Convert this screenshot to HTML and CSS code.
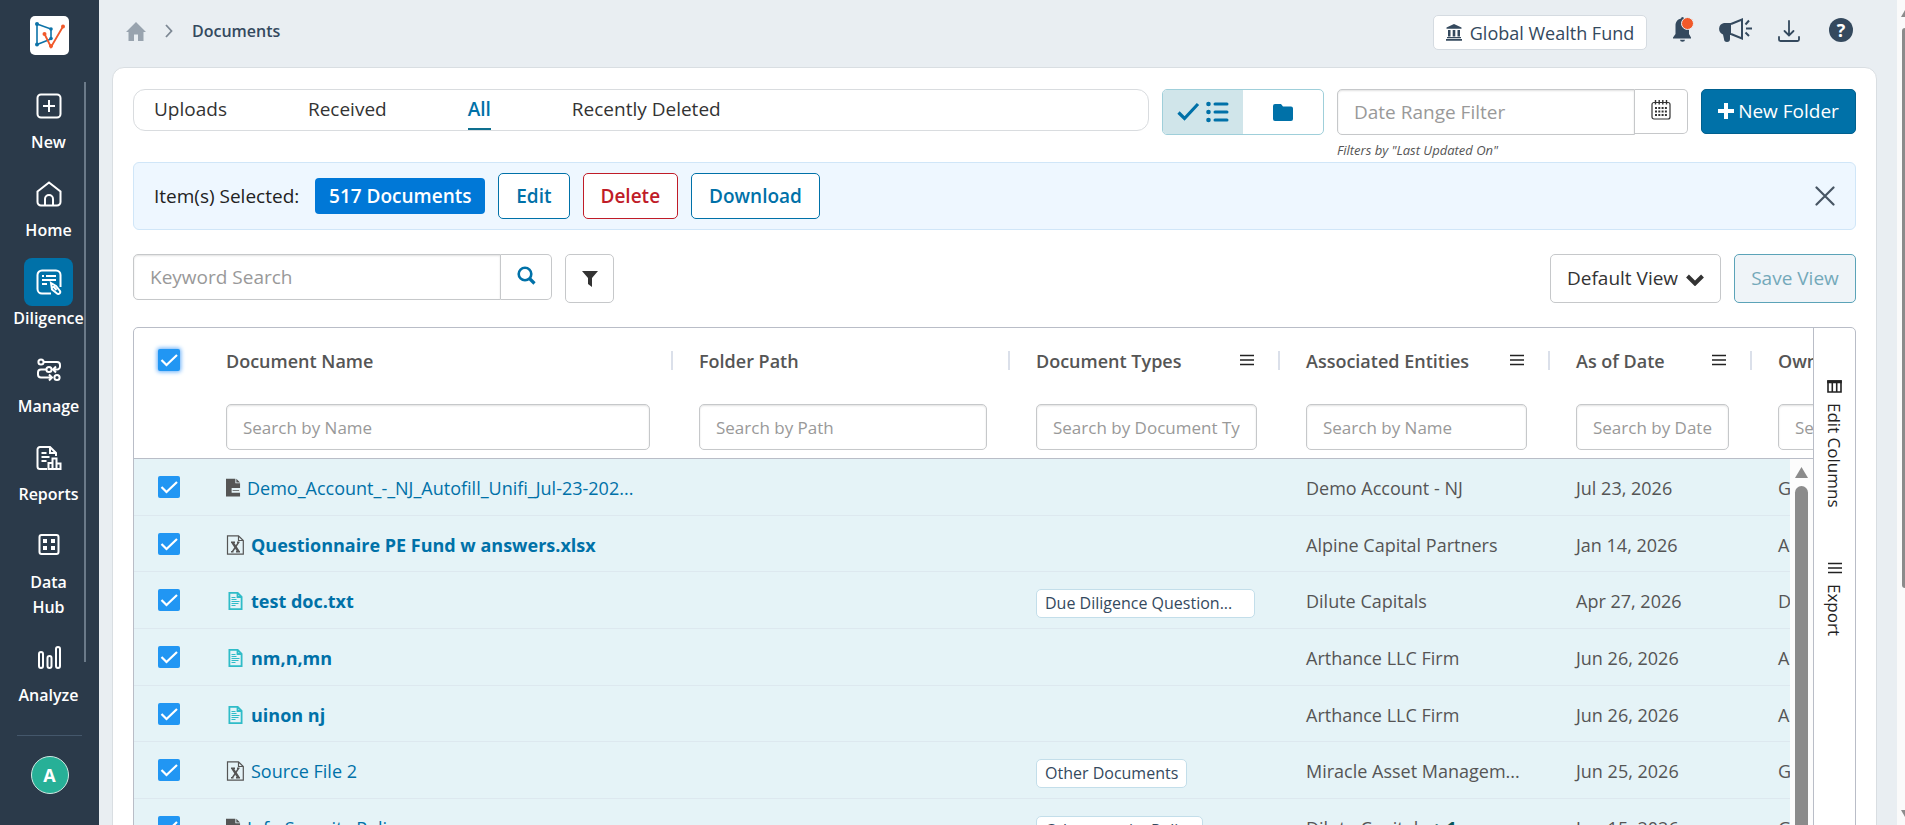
FILE: index.html
```html
<!DOCTYPE html>
<html lang="en">
<head>
    <meta charset="UTF-8">
    <meta name="viewport" content="width=device-width, initial-scale=1.0">
    <title>Documents</title>
    <link rel="stylesheet" href="styles.css">
</head>
<body>
    <!-- shared icons -->
    <svg class="icon-defs" aria-hidden="true">
        <symbol id="file-dark" viewBox="0 0 16 20">
            <path fill="#555" d="M0 0h10v5h5v5H6v5h9v4H0z"/>
            <path fill="#555" d="M11 0l4 4h-4z"/>
            <path fill="#555" d="M7 12h7v1H7z"/>
        </symbol>
        <symbol id="file-excel" viewBox="0 0 18 20">
            <path fill="none" stroke="#555" stroke-width="1.2" d="M1 .8h11l4.8 4.7v13.7H1zM12 .8v4.7h4.8"/>
            <path fill="none" stroke="#555" stroke-width="2.4" d="M6 7.5l6 9"/>
            <path fill="none" stroke="#555" stroke-width="1.4" d="M12 7.5l-6 9M4.5 7.3h4M10.5 7.3H13M4.5 16.7H7M9.5 16.7h4"/>
        </symbol>
        <symbol id="file-text" viewBox="0 0 14 18">
            <path fill="none" stroke="#2fbcc8" stroke-width="1.8" d="M.9 .9h8.3l3.900 3.900v12.300H.9zM9 .8V5h4.200"/>
            <path stroke="#2fbcc8" stroke-width="1.2" d="M3 5.500h4M3 7.500h5M3 9.500h8M3 11.500h7M3 13.500h4"/>
        </symbol>
        <symbol id="menu" viewBox="0 0 14 12">
            <path stroke="#222" stroke-width="1.4" d="M0 1.500h14M0 6h14M0 10.500h14"/>
        </symbol>
    </svg>

    <aside class="sidebar">
        <a class="logo" href="#" aria-label="Home page">
            <svg width="39" height="39" viewBox="0 0 39 39">
                <path fill="none" stroke="#0d73a8" stroke-width="1.6" d="M7 8l14 5v10L7 28.500z"/>
                <g fill="#0d73a8"><circle cx="7" cy="8" r="2"/><circle cx="21" cy="13" r="1.800"/><circle cx="7" cy="28.500" r="2"/><circle cx="21" cy="22.500" r="1.800"/></g>
                <path fill="none" stroke="#f1592a" stroke-width="1.800" d="M14.500 18L21 31 33 10.500"/>
                <g fill="#f1592a"><circle cx="14.500" cy="18" r="2"/><circle cx="21" cy="30" r="2"/><circle cx="33" cy="10.500" r="2"/></g>
            </svg>
        </a>
        <nav class="side-nav">
            <a href="#" class="side-item">
                <span class="tile"><svg width="26" height="26" viewBox="0 0 26 26"><rect x="1.500" y="1.500" width="23" height="23" rx="3.500"/><path d="M13 7v12M7 13h12"/></svg></span>
                <span>New</span>
            </a>
            <a href="#" class="side-item">
                <span class="tile"><svg width="26" height="26" viewBox="0 0 26 26"><path d="M1.500 10.500L13 1.500l11.500 9V21a3.500 3.500 0 0 1-3.500 3.500H5A3.500 3.500 0 0 1 1.500 21zM9 24.500V18a4 4 0 0 1 8 0v6.500"/></svg></span>
                <span>Home</span>
            </a>
            <a href="#" class="side-item active">
                <span class="tile"><svg width="26" height="26" viewBox="0 0 26 26"><path d="M15 24.500H6A4.500 4.500 0 0 1 1.500 20V6A4.500 4.500 0 0 1 6 1.500h14A4.500 4.500 0 0 1 24.500 6v12M6 7h2M10 7h10M6 11h14M6 15h5M15 14l5 3 4 5a2 2 0 0 1-3 2.500l-5-4zM17 17l3.500 4"/></svg></span>
                <span>Diligence</span>
            </a>
            <a href="#" class="side-item">
                <span class="tile"><svg width="26" height="26" viewBox="0 0 26 26"><circle cx="5" cy="5" r="2.600"/><circle cx="13" cy="12.500" r="2.600"/><circle cx="21" cy="20.500" r="2.600"/><path d="M8 5h13a3 3 0 0 1 3 3v1.500a3 3 0 0 1-3 3h-3M20 9.500l-3 3 3 3M10 12.500H5a3 3 0 0 0-3 3v2a3 3 0 0 0 3 3h10M13 17.500l3 3-3 3"/></svg></span>
                <span>Manage</span>
            </a>
            <a href="#" class="side-item">
                <span class="tile"><svg width="26" height="26" viewBox="0 0 26 26"><path d="M11 24H4a2.500 2.500 0 0 1-2.500-2.500v-17A2.500 2.500 0 0 1 4 2h10l6 6v3M14 2v6h6M5.500 8h5M5.500 12h8M5.500 16h5M12.500 24v-6h4v6zM16.500 24V13.500h4V24zM20.500 24v-5.500h4V24z"/></svg></span>
                <span>Reports</span>
            </a>
            <a href="#" class="side-item">
                <span class="tile"><svg width="26" height="26" viewBox="0 0 26 26"><rect x="3.500" y="2" width="19" height="19" rx="2"/><path class="solid" d="M7 6h4v4H7zM15 6h4v4h-4zM7 13h4v4H7zM15 13h4v4h-4z"/></svg></span>
                <span>Data Hub</span>
            </a>
            <a href="#" class="side-item">
                <span class="tile"><svg width="26" height="26" viewBox="0 0 26 26"><rect x="3" y="6" width="4" height="16" rx="2"/><rect x="11.500" y="10" width="4" height="12" rx="2"/><rect x="20" y="1" width="4" height="21" rx="2"/></svg></span>
                <span>Analyze</span>
            </a>
        </nav>
        <div class="side-footer">
            <button class="avatar">A</button>
        </div>
    </aside>

    <div class="page">
        <header class="topbar">
            <nav class="breadcrumb">
                <a href="#" aria-label="Home"><svg width="20" height="19" viewBox="0 0 20 19"><path fill="#98a3ae" d="M10 0l10 10h-2.500v9H12v-6.500H8V19H2.500v-9H0z"/></svg></a>
                <svg width="8" height="14" viewBox="0 0 8 14"><path fill="none" stroke="#7d8894" stroke-width="1.800" d="M1 1l5.500 6L1 13"/></svg>
                <span>Documents</span>
            </nav>
            <div class="top-actions">
                <button class="fund-btn">
                    <svg width="16" height="17" viewBox="0 0 16 17"><path fill="#34495e" d="M8 0l7.500 3.500v1.300H.5V3.500zM2 6h2.500v6.500H2zM6.700 6h2.600v6.500H6.700zM11.500 6H14v6.500h-2.500zM1 13h14v1.200H1zM0 15h16v1.700H0z"/></svg>
                    Global Wealth Fund
                </button>
                <button class="icon-btn bell" aria-label="Notifications">
                    <svg width="22" height="26" viewBox="0 0 22 26"><path fill="#34495e" d="M9 1.500a1.500 1.500 0 0 1 3 0c3.500 1 5 3.500 5 7.500v8l2 3.500v1H1v-1L3.500 17V9c0-4 1.500-6.500 5.500-7.500zM8 22.700h5a2.500 2 0 0 1-5 0z"/><circle cx="15.500" cy="6.500" r="6" fill="#f1592a" stroke="#e9eef2"/></svg>
                </button>
                <button class="icon-btn" aria-label="Announcements">
                    <svg width="34" height="26" viewBox="0 0 34 26"><path fill="#34495e" d="M5 6h7v12h-1v4a2.500 2.500 0 0 1-6 0l-1-4.500A6 6 0 0 1 5 6z"/><path fill="none" stroke="#34495e" stroke-width="2" d="M12 7l11-4.500v19L12 17M26.500 7.500l3.500-4M27 11.500h6M26.500 15.500l3.500 3.500"/></svg>
                </button>
                <button class="icon-btn" aria-label="Downloads">
                    <svg width="22" height="26" viewBox="0 0 22 26"><path fill="none" stroke="#34495e" stroke-width="1.800" stroke-linecap="round" d="M11 4v14M6.500 14l4.500 4.500 4.500-4.500M1 20v2.500a1.500 1.500 0 0 0 1.500 1.500h17a1.500 1.500 0 0 0 1.500-1.500V20"/></svg>
                </button>
                <button class="icon-btn help" aria-label="Help">?</button>
            </div>
        </header>

        <main class="card">
            <div class="toolbar">
                <nav class="tabs">
                    <a href="#">Uploads</a>
                    <a href="#">Received</a>
                    <a href="#" class="active">All</a>
                    <a href="#">Recently Deleted</a>
                </nav>
                <div class="toggle">
                    <button class="on" aria-label="List view">
                        <svg width="52" height="22" viewBox="0 0 52 22"><path fill="none" stroke="#0071a8" stroke-width="3.200" d="M1.500 11.500l6 6L21 3"/><path stroke="#0071a8" stroke-width="3" stroke-linecap="round" d="M38 3h12M38 11h12M38 19h12"/><g fill="#0071a8"><circle cx="31.500" cy="3" r="2.300"/><circle cx="31.500" cy="11" r="2.300"/><circle cx="31.500" cy="19" r="2.300"/></g></svg>
                    </button>
                    <button aria-label="Folder view">
                        <svg width="20" height="17" viewBox="0 0 20 17"><path fill="#0071a8" d="M2 0h6l2 2.500h8a2 2 0 0 1 2 2V15a2 2 0 0 1-2 2H2a2 2 0 0 1-2-2V2a2 2 0 0 1 2-2z"/></svg>
                    </button>
                </div>
                <div class="date-filter">
                    <div class="input-group">
                        <input type="text" id="dateRange" placeholder="Date Range Filter" aria-describedby="dateHint" aria-label="Date Range Filter">
                        <button aria-label="Open calendar">
                            <svg width="20" height="20" viewBox="0 0 20 20"><rect x="1" y="2.500" width="18" height="16.500" rx="2" fill="none" stroke="#333" stroke-width="1.200"/><path stroke="#333" stroke-width="1.400" d="M4.500 0v4.500M8.200 0v4.500M11.800 0v4.500M15.500 0v4.500"/><path stroke="#333" stroke-width="2" stroke-dasharray="2 1.300" d="M4 8h12.500M4 11.500h12.500M4 15h12.500"/></svg>
                        </button>
                    </div>
                    <small id="dateHint">Filters by "Last Updated On"</small>
                </div>
                <button class="new-folder">
                    <svg width="16" height="16" viewBox="0 0 16 16"><path stroke="#fff" stroke-width="4" d="M8 0v16M0 8h16"/></svg>
                    New Folder
                </button>
            </div>

            <div class="selection">
                <span class="selection-label">Item(s) Selected:</span>
                <button class="count">517 Documents</button>
                <button class="outline">Edit</button>
                <button class="outline danger">Delete</button>
                <button class="outline">Download</button>
                <button class="close" aria-label="Clear selection">
                    <svg width="20" height="20" viewBox="0 0 20 20"><path stroke="#475563" stroke-width="2.200" stroke-linecap="round" d="M1.500 1.500l17 17M18.500 1.500l-17 17"/></svg>
                </button>
            </div>

            <div class="search-row">
                <div class="input-group keyword">
                    <input type="text" placeholder="Keyword Search" aria-label="Keyword Search">
                    <button aria-label="Search">
                        <svg width="19" height="19" viewBox="0 0 19 19"><circle cx="8" cy="8" r="6.300" fill="none" stroke="#0071a8" stroke-width="2.600"/><path stroke="#0071a8" stroke-width="3.200" d="M12.500 12.500l5 5"/></svg>
                    </button>
                </div>
                <button class="filter-btn" aria-label="Filters">
                    <svg width="16" height="16" viewBox="0 0 16 16"><path fill="#333" d="M0 0h16L10 7v9l-4-3V7z"/></svg>
                </button>
                <div class="view-select">
                    <select aria-label="View">
                        <option>Default View</option>
                    </select>
                    <svg width="18" height="12" viewBox="0 0 18 12"><path fill="none" stroke="#333" stroke-width="4" d="M1.500 2L9 9.500 16.500 2"/></svg>
                </div>
                <button class="save-view" disabled>Save View</button>
            </div>

            <div class="grid">
                <div class="grid-body">
                    <table>
                        <colgroup>
                            <col class="col-check"><col class="col-name"><col class="col-path"><col class="col-type"><col class="col-entity"><col class="col-date"><col class="col-owner">
                        </colgroup>
                        <thead>
                            <tr>
                                <th class="check"><input type="checkbox" class="focused" aria-label="Select all" checked></th>
                                <th><div class="th-label">Document Name</div><input type="text" placeholder="Search by Name" aria-label="Document Name"></th>
                                <th><div class="th-label">Folder Path</div><input type="text" placeholder="Search by Path" aria-label="Folder Path"></th>
                                <th><div class="th-label">Document Types<button aria-label="Column menu"><svg width="14" height="12"><use href="#menu"/></svg></button></div><input type="text" placeholder="Search by Document Type" aria-label="Document Types"></th>
                                <th><div class="th-label">Associated Entities<button aria-label="Column menu"><svg width="14" height="12"><use href="#menu"/></svg></button></div><input type="text" placeholder="Search by Name" aria-label="Associated Entities"></th>
                                <th><div class="th-label">As of Date<button aria-label="Column menu"><svg width="14" height="12"><use href="#menu"/></svg></button></div><input type="text" placeholder="Search by Date" aria-label="As of Date"></th>
                                <th><div class="th-label">Owner</div><input type="text" placeholder="Search by Owner" aria-label="Owner"></th>
                            </tr>
                        </thead>
                        <tbody>
                            <tr>
                                <td class="check"><input type="checkbox" aria-label="Select row" checked></td>
                                <td><a href="#" class="doc"><svg width="15" height="20"><use href="#file-dark"/></svg>Demo_Account_-_NJ_Autofill_Unifi_Jul-23-202...</a></td>
                                <td></td>
                                <td></td>
                                <td>Demo Account - NJ</td>
                                <td>Jul 23, 2026</td>
                                <td>G</td>
                            </tr>
                            <tr>
                                <td class="check"><input type="checkbox" aria-label="Select row" checked></td>
                                <td><a href="#" class="doc unread"><svg width="19" height="20"><use href="#file-excel"/></svg>Questionnaire PE Fund w answers.xlsx</a></td>
                                <td></td>
                                <td></td>
                                <td>Alpine Capital Partners</td>
                                <td>Jan 14, 2026</td>
                                <td>A</td>
                            </tr>
                            <tr>
                                <td class="check"><input type="checkbox" aria-label="Select row" checked></td>
                                <td><a href="#" class="doc unread"><svg width="19" height="18"><use href="#file-text"/></svg>test doc.txt</a></td>
                                <td></td>
                                <td><span class="chip chip-cut">Due Diligence Question...</span></td>
                                <td>Dilute Capitals</td>
                                <td>Apr 27, 2026</td>
                                <td>D</td>
                            </tr>
                            <tr>
                                <td class="check"><input type="checkbox" aria-label="Select row" checked></td>
                                <td><a href="#" class="doc unread"><svg width="19" height="18"><use href="#file-text"/></svg>nm,n,mn</a></td>
                                <td></td>
                                <td></td>
                                <td>Arthance LLC Firm</td>
                                <td>Jun 26, 2026</td>
                                <td>A</td>
                            </tr>
                            <tr>
                                <td class="check"><input type="checkbox" aria-label="Select row" checked></td>
                                <td><a href="#" class="doc unread"><svg width="19" height="18"><use href="#file-text"/></svg>uinon nj</a></td>
                                <td></td>
                                <td></td>
                                <td>Arthance LLC Firm</td>
                                <td>Jun 26, 2026</td>
                                <td>A</td>
                            </tr>
                            <tr>
                                <td class="check"><input type="checkbox" aria-label="Select row" checked></td>
                                <td><a href="#" class="doc"><svg width="19" height="20"><use href="#file-excel"/></svg>Source File 2</a></td>
                                <td></td>
                                <td><span class="chip">Other Documents</span></td>
                                <td>Miracle Asset Managem...</td>
                                <td>Jun 25, 2026</td>
                                <td>G</td>
                            </tr>
                            <tr>
                                <td class="check"><input type="checkbox" aria-label="Select row" checked></td>
                                <td><a href="#" class="doc"><svg width="15" height="20"><use href="#file-dark"/></svg>Info Security Policy</a></td>
                                <td></td>
                                <td><span class="chip">Cybersecurity Policy</span></td>
                                <td>Dilute Capitals <b class="more">+ 1</b></td>
                                <td>Jun 15, 2026</td>
                                <td>G</td>
                            </tr>
                        </tbody>
                    </table>
                    <div class="grid-scroll"><span></span></div>
                </div>
                <div class="grid-side">
                    <button>
                        <svg width="15" height="13" viewBox="0 0 15 13"><path fill="none" stroke="#222" stroke-width="1.600" d="M1 1h13v11H1zM5.300 1v11M9.700 1v11"/><path stroke="#222" stroke-width="3" d="M.2 1.700h14.600"/></svg>
                        Edit Columns
                    </button>
                    <button>
                        <svg width="14" height="12"><use href="#menu"/></svg>
                        Export
                    </button>
                </div>
            </div>
        </main>
    </div>

    <div class="page-scroll"><span></span></div>
</body>
</html>
```
FILE: styles.css
```css
* {
    box-sizing: border-box;
}
body {
    margin: 0;
    display: flex;
    height: 100vh;
    overflow: hidden;
    background: #e9eef2;
    font-family: "Open Sans", "Noto Sans", sans-serif;
    font-size: 19px;
    color: #333;
}
a {
    text-decoration: none;
    color: inherit;
}
button, input, select {
    font: inherit;
    color: inherit;
}
button {
    display: flex;
    align-items: center;
    justify-content: center;
    padding: 0;
    border: 0;
    background: none;
    white-space: nowrap;
    cursor: pointer;
}
svg {
    display: block;
    flex: none;
}
.icon-defs {
    position: absolute;
    width: 0;
    height: 0;
}

/* sidebar */
.sidebar {
    flex: none;
    width: 99px;
    display: flex;
    flex-direction: column;
    background: #2b3a4a;
    color: #fff;
}
.logo {
    align-self: center;
    margin-top: 16px;
    border-radius: 5px;
    background: #fff;
}
.side-nav {
    width: 86px;
    height: 580px;
    margin-top: 27px;
    padding-left: 11px;
    border-right: 2px solid #6b7a89;
}
.side-item {
    display: flex;
    flex-direction: column;
    align-items: center;
    width: 75px;
    padding-bottom: 15px;
    font-size: 16px;
    line-height: 25px;
    font-weight: 600;
    text-align: center;
}
.side-item:nth-child(6) > span:last-child {
    max-width: 50px;
}
.tile {
    display: flex;
    align-items: center;
    justify-content: center;
    width: 49px;
    height: 48px;
    border-radius: 8px;
}
.tile svg {
    fill: none;
    stroke: #fff;
    stroke-width: 2;
}
.tile .solid {
    fill: #fff;
    stroke: none;
}
.active .tile {
    background: #0071a8;
}
.side-footer {
    width: 65px;
    margin: 73px auto 0;
    padding-top: 20px;
    border-top: 1px solid #44576b;
}
.avatar {
    width: 38px;
    height: 38px;
    margin: 0 auto;
    border: 1px solid #cfe9e3;
    border-radius: 50%;
    background: #27b097;
    color: #fff;
    font-size: 18px;
    font-weight: 700;
}

/* top bar */
.page {
    flex: 1;
    min-width: 0;
    padding: 0 20px 0 13px;
}
.topbar {
    display: flex;
    justify-content: space-between;
    height: 67px;
    padding: 15px 24px 0 14px;
}
.breadcrumb {
    display: flex;
    align-items: center;
    gap: 19px;
    height: 32px;
    font-size: 16px;
    font-weight: 600;
    color: #34495e;
}
.top-actions {
    display: flex;
    gap: 25px;
}
.fund-btn {
    gap: 8px;
    width: 214px;
    height: 35px;
    border: 1px solid #d5dbe1;
    border-radius: 5px;
    background: #fff;
    font-size: 18px;
    color: #34495e;
}
.icon-btn {
    height: 30px;
}
.help {
    width: 24px;
    height: 24px;
    margin: 3px 0 0 4px;
    border-radius: 50%;
    background: #34495e;
    color: #fff;
    font-size: 18px;
    font-weight: 700;
}

/* card */
.card {
    min-height: 100vh;
    padding: 21px 20px;
    border: 1px solid #d9dee2;
    border-radius: 12px;
    background: #fff;
}
.toolbar {
    display: flex;
    gap: 13px;
}
.tabs {
    flex: 1;
    display: flex;
    gap: 81px;
    height: 42px;
    padding-left: 20px;
    border: 1px solid #d9dcdf;
    border-radius: 12px;
}
.tabs a {
    height: 40px;
    line-height: 38px;
}
.tabs .active {
    border-bottom: 2px solid #0e6f8f;
    color: #0071a8;
    font-weight: 600;
}
.toggle {
    display: flex;
    width: 162px;
    height: 46px;
    border: 1px solid #9fcfda;
    border-radius: 5px;
    overflow: hidden;
}
.toggle button {
    flex: 1;
}
.toggle .on {
    background: #d0e5ea;
}
.input-group {
    display: flex;
}
input[type="text"] {
    width: 100%;
    min-width: 0;
    height: 46px;
    padding: 0 16px;
    border: 1px solid #c6c8ca;
    border-radius: 5px;
    background: #fff;
    box-shadow: inset 0 1px 2px rgba(0, 0, 0, 0.12);
    font-weight: 400;
}
input::placeholder {
    color: #999;
    opacity: 1;
}
.input-group input[type="text"] {
    flex: 1;
    border-radius: 5px 0 0 5px;
}
.input-group button {
    width: 53px;
    height: 46px;
    padding-bottom: 3px;
    border: 1px solid #c6c8ca;
    border-left: 0;
    border-radius: 0 5px 5px 0;
}
.date-filter {
    width: 351px;
    height: 73px;
}
.date-filter .input-group button {
    height: 45px;
}
.date-filter small {
    display: block;
    margin-top: 5px;
    font-size: 13px;
    line-height: 20px;
    font-style: italic;
    color: #555;
}
.new-folder {
    gap: 4px;
    width: 155px;
    height: 45px;
    padding-bottom: 1px;
    border: 1px solid #00608f;
    border-radius: 5px;
    background: #0071a8;
    color: #fff;
}
.selection {
    display: flex;
    align-items: center;
    gap: 13px;
    height: 68px;
    padding: 0 20px;
    border: 1px solid #d0e6f8;
    border-radius: 6px;
    background: #eef7ff;
    color: #222;
}
.selection-label {
    margin-right: 3px;
}
.count {
    width: 170px;
    height: 36px;
    border-radius: 4px;
    background: #0078d7;
    color: #fff;
    font-weight: 600;
}
.outline {
    height: 46px;
    padding: 0 17px 1px;
    border: 1px solid #0071a8;
    border-radius: 5px;
    background: #fff;
    color: #0071a8;
    font-weight: 600;
}
.danger {
    border-color: #c01c28;
    color: #c01c28;
}
.close {
    margin-left: auto;
}
.search-row {
    display: flex;
    gap: 13px;
    margin: 24px 0;
}
.keyword {
    width: 419px;
}
.keyword button {
    width: 51px;
}
.filter-btn {
    width: 49px;
    height: 49px;
    border: 1px solid #c6c8ca;
    border-radius: 5px;
}
.view-select {
    position: relative;
    width: 171px;
    margin-left: auto;
}
.view-select select {
    appearance: none;
    width: 100%;
    height: 49px;
    padding: 0 36px 1px 16px;
    border: 1px solid #c6c8ca;
    border-radius: 5px;
    background: #fff;
}
.view-select svg {
    position: absolute;
    top: 20px;
    right: 17px;
    pointer-events: none;
}
.save-view {
    width: 122px;
    height: 49px;
    padding-bottom: 1px;
    border: 1px solid #5ba3b8;
    border-radius: 5px;
    background: #eff4f8;
    color: #74a9ba;
}

/* documents grid */
.grid {
    display: flex;
    border: 1px solid #b9bdc7;
    border-radius: 5px;
    overflow: hidden;
}
.grid-body {
    position: relative;
    flex: 1;
    min-width: 0;
    overflow: hidden;
}
table {
    width: 1887px;
    table-layout: fixed;
    border-collapse: separate;
    border-spacing: 0;
    font-size: 18px;
    color: #555;
}
.col-check { width: 65px; }
.col-name { width: 473px; }
.col-path { width: 337px; }
.col-type { width: 270px; }
.col-entity { width: 270px; }
.col-date { width: 202px; }
.col-owner { width: 270px; }
th {
    position: relative;
    height: 131px;
    padding: 20px 22px 8px 27px;
    border-bottom: 1px solid #b9bdc7;
    text-align: left;
    vertical-align: top;
    font-weight: 600;
}
th + th::after {
    content: "";
    position: absolute;
    top: 23px;
    right: -1px;
    width: 2px;
    height: 19px;
    background: #dbe0ea;
}
.th-label {
    display: flex;
    justify-content: space-between;
    align-items: center;
    height: 26px;
    margin-bottom: 30px;
    padding-right: 3px;
    white-space: nowrap;
}
.th-label button {
    padding-bottom: 2px;
}
th input[type="text"] {
    font-size: 17px;
}
td {
    height: 57px;
    padding: 2px 22px 0 27px;
    border-bottom: 1px solid #dde8ef;
    background: #e5f3f7;
    white-space: nowrap;
}
tr:nth-child(3n + 2) td {
    height: 56px;
}
.check {
    padding: 21px 0 0 24px;
}
td.check {
    padding-top: 0;
}
input[type="checkbox"] {
    appearance: none;
    display: block;
    width: 22px;
    height: 22px;
    margin: 0;
    border-radius: 2px;
    background: #2196f3 url("data:image/svg+xml,%3Csvg xmlns='http://www.w3.org/2000/svg' viewBox='0 0 22 22'%3E%3Cpath d='M3.5 11l5 5L19 6' fill='none' stroke='white' stroke-width='2.2'/%3E%3C/svg%3E");
}
input.focused {
    box-shadow: 0 0 4px 1px #66affa;
}
.doc {
    display: flex;
    align-items: center;
    gap: 6px;
    color: #0071a8;
}
.unread {
    font-weight: 700;
}
.chip {
    display: inline-block;
    height: 29px;
    margin-top: 5px;
    padding: 0 8px;
    border: 1px solid #c3deea;
    border-radius: 5px;
    background: #fff;
    font-size: 16px;
    line-height: 26px;
    color: #34495e;
}
.chip-cut {
    width: 219px;
}
.more {
    color: #07575b;
}
.grid-scroll {
    position: absolute;
    top: 131px;
    right: 0;
    bottom: 0;
    width: 23px;
    padding: 8px 5px 0;
    background: #fcfcfc;
}
.grid-scroll::before {
    content: "";
    display: block;
    height: 11px;
    background: #8b8b8b;
    clip-path: polygon(50% 0, 100% 100%, 0 100%);
}
.grid-scroll span {
    display: block;
    height: 100%;
    margin-top: 8px;
    border-radius: 7px;
    background: #8b8b8b;
}
.grid-side {
    width: 42px;
    display: flex;
    flex-direction: column;
    align-items: center;
    gap: 54px;
    padding-top: 52px;
    border-left: 1px solid #b9bdc7;
}
.grid-side button {
    writing-mode: vertical-rl;
    gap: 10px;
    font-size: 17px;
    color: #222;
}

/* page scrollbar */
.page-scroll {
    flex: none;
    width: 8px;
    display: flex;
    flex-direction: column;
    padding: 10px 0 8px 4px;
    background: #fafafa;
}
.page-scroll::before,
.page-scroll::after {
    content: "";
    height: 7px;
    background: #8b8b8b;
    clip-path: polygon(100% 0, 100% 100%, 0 100%);
}
.page-scroll::after {
    clip-path: polygon(0 0, 100% 0, 100% 100%);
}
.page-scroll span {
    height: 560px;
    margin: 11px 0 auto 1px;
    border-radius: 5px 0 0 5px;
    background: #8b8b8b;
}
```
